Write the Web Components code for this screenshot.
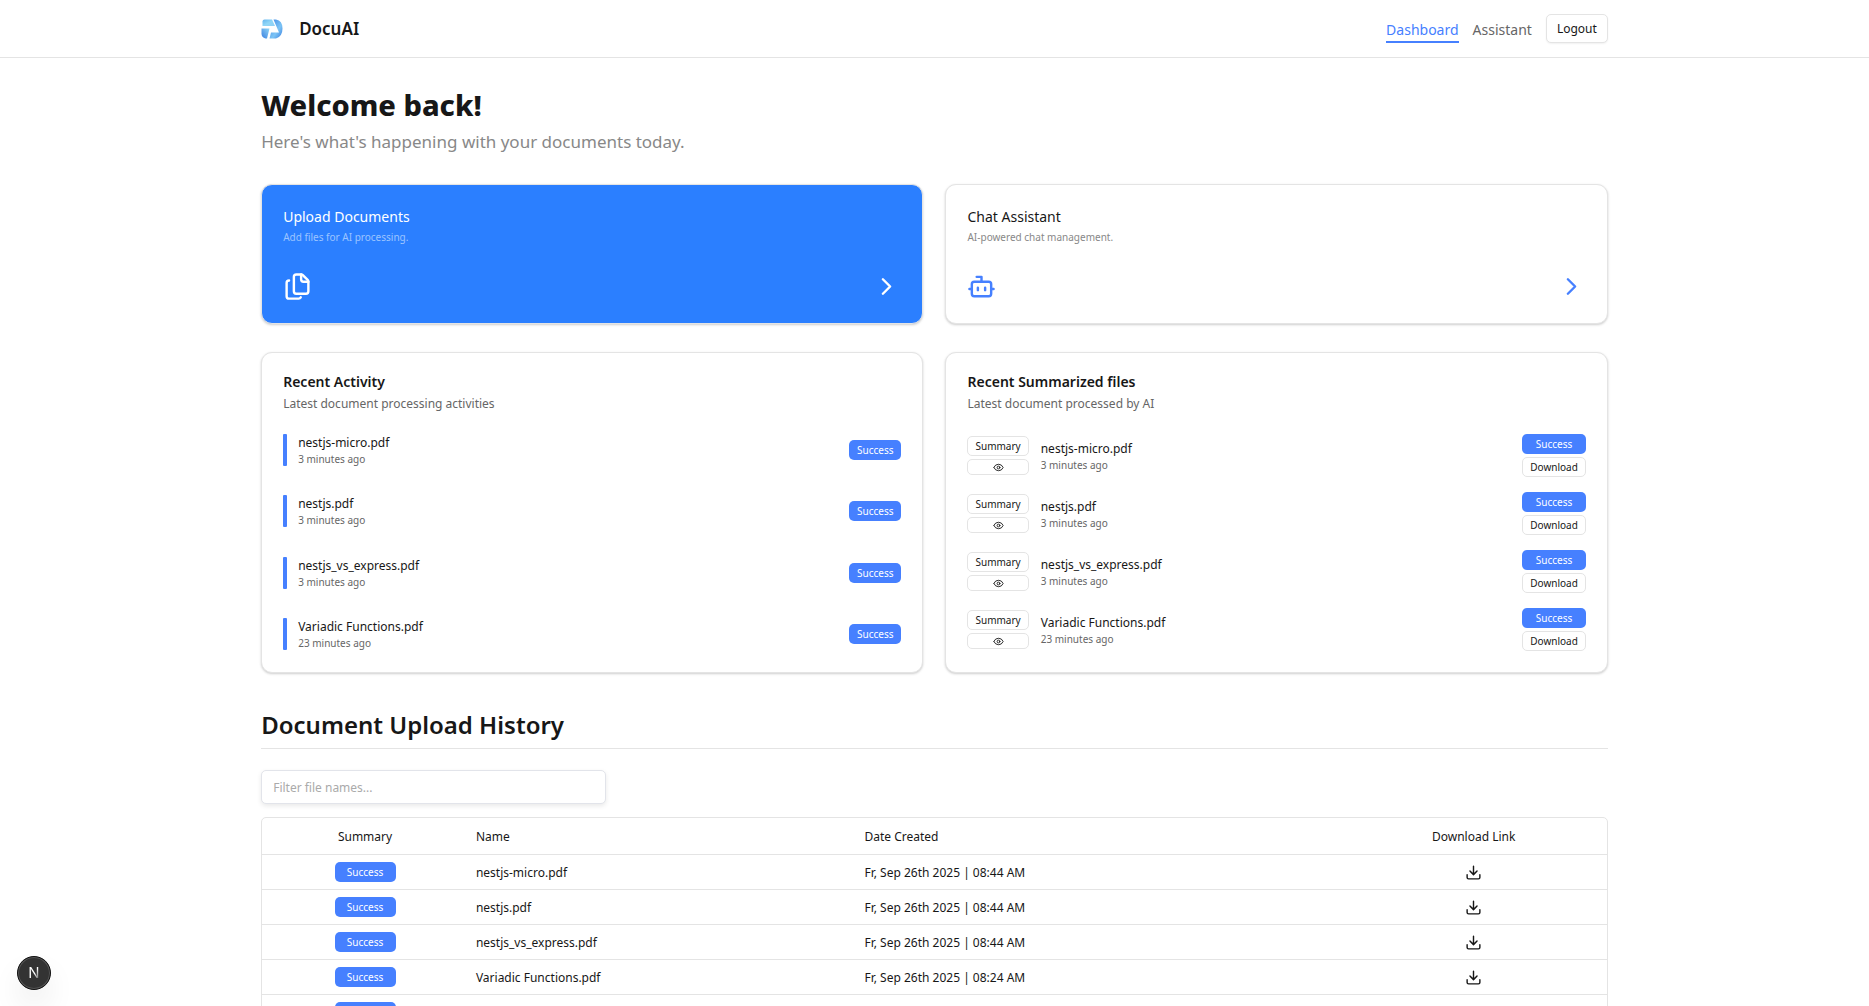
<!DOCTYPE html>
<html lang="en">
<head>
<meta charset="utf-8">
<title>DocuAI</title>
<style>
  :root { --page:calc(72% + 1px); --blue:#2b7fff; --accent:#4680ff; --line:#e4e4e4; --ink:#171717; --soft:#666; --mute:#888; }
  html { overflow: hidden; height: 100%; }
  body { margin: 0; height: 100%; overflow: hidden; background: #fff; color: var(--ink); font-family: "Noto Sans", sans-serif; font-size: 12px; line-height: 20px; }
</style>
</head>
<body>
<docu-app></docu-app>
<script>
const ICONS = {
  copy: '<path d="M15 2a2 2 0 0 1 1.4.6l4 4A2 2 0 0 1 21 8v8a2 2 0 0 1-2 2h-8a2 2 0 0 1-2-2V4a2 2 0 0 1 2-2z"/><path d="M15 2v4a2 2 0 0 0 2 2h4"/><path d="M5 7a2 2 0 0 0-2 2v11a2 2 0 0 0 2 2h8a2 2 0 0 0 1.7-1"/>',
  bot: '<path d="M12 8V4H8"/><rect width="16" height="12" x="4" y="8" rx="2"/><path d="M2 14h2M20 14h2M15 13v2M9 13v2"/>',
  chevron: '<path d="m9 18 6-6-6-6"/>',
  eye: '<path d="M2.06 12.35a1 1 0 0 1 0-.7 10.75 10.75 0 0 1 19.88 0 1 1 0 0 1 0 .7 10.75 10.75 0 0 1-19.88 0"/><circle cx="12" cy="12" r="3"/>',
  download: '<path d="M21 15v4a2 2 0 0 1-2 2H5a2 2 0 0 1-2-2v-4"/><path d="M12 3v12M7 10l5 5 5-5"/>'
};
const FILES = [
  ['nestjs-micro.pdf', '3 minutes ago', 'Fr, Sep 26th 2025 | 08:44 AM'],
  ['nestjs.pdf', '3 minutes ago', 'Fr, Sep 26th 2025 | 08:44 AM'],
  ['nestjs_vs_express.pdf', '3 minutes ago', 'Fr, Sep 26th 2025 | 08:44 AM'],
  ['Variadic Functions.pdf', '23 minutes ago', 'Fr, Sep 26th 2025 | 08:24 AM']
];
const define = (name, html) => customElements.define(name, class extends HTMLElement {
  constructor() {
    super();
    this.attachShadow({ mode: 'open' }).innerHTML = typeof html === 'function' ? html(this) : html;
  }
});

customElements.define('docu-icon', class extends HTMLElement {
  connectedCallback() {
    const root = this.shadowRoot || this.attachShadow({ mode: 'open' });
    root.innerHTML = `<style>:host{display:block;width:24px;height:24px}svg{display:block;width:100%;height:100%}</style>
      <svg viewBox="0 0 24 24" fill="none" stroke="currentColor" stroke-width="2" stroke-linecap="round" stroke-linejoin="round" aria-hidden="true">${ICONS[this.getAttribute('name')]}</svg>`;
  }
});

define('docu-badge', `<style>
  :host{display:flex;align-items:center;justify-content:center;box-sizing:border-box;height:20px;padding:0 8px;border-radius:5px;background:var(--accent);color:#fff;font-size:10px;line-height:16px}
</style><slot></slot>`);

define('docu-button', `<style>
  :host{display:block}
  button{display:flex;align-items:center;justify-content:center;box-sizing:border-box;width:100%;height:var(--h,20px);padding:0 var(--px,7px);margin:0;border:1px solid var(--line);border-radius:5px;background:#fff;color:var(--ink);font:inherit;font-size:var(--fs,10px);line-height:16px;cursor:pointer;box-shadow:var(--sh,none)}
</style><button type="button"><slot></slot></button>`);

define('docu-header', `<style>
  :host{display:block;border-bottom:1px solid var(--line)}
  header{display:flex;align-items:center;justify-content:space-between;width:var(--page);height:57px;margin:0 auto}
  .brand{display:flex;align-items:center;gap:16px;color:inherit;text-decoration:none;font-size:17px;line-height:28px;font-weight:600}
  .brand svg{display:block;width:22px;height:22px}
  nav{display:flex;align-items:center;gap:14px;font-size:14px;line-height:22px}
  nav a{color:var(--soft);text-decoration:none;padding:4px 0 0;border-bottom:2px solid transparent}
  nav a[aria-current]{color:var(--accent);border-color:var(--accent)}
  docu-button{--h:29px;--fs:12px;--px:10px;--sh:0 1px 2px rgba(0,0,0,.06)}
</style>
<header>
  <a class="brand" href="#"><svg viewBox="0 0 22 22" aria-hidden="true">
    <defs><linearGradient id="a" x1="0" y1="0" x2="1" y2="1"><stop offset="0" stop-color="#62b4ef"/><stop offset=".5" stop-color="#8fd6f7"/><stop offset="1" stop-color="#8fd0f5"/></linearGradient>
    <linearGradient id="b" x1="0" y1="0" x2="1" y2="1"><stop offset="0" stop-color="#3d86e4"/><stop offset=".6" stop-color="#7cc4f5"/><stop offset="1" stop-color="#3b7fe0"/></linearGradient>
    <linearGradient id="c" x1="0" y1="1" x2="1" y2="0"><stop offset="0" stop-color="#3b7fe0"/><stop offset="1" stop-color="#8fd6f7"/></linearGradient></defs>
    <path fill="url(#a)" d="M3.500 1.500H11l3 6.500H1.500V3.500Q1.500 1.500 3.500 1.500z"/>
    <path fill="url(#b)" d="M12.500 1.500H15q6.500 1 6.500 9T15 20.500H8.500L10 14.500h8z"/>
    <path fill="url(#c)" d="M.5 10.500H8.500L6 20.500H4.500Q.5 19.500.5 15.500z"/></svg>DocuAI</a>
  <nav><a href="#" aria-current="page">Dashboard</a><a href="#">Assistant</a><docu-button>Logout</docu-button></nav>
</header>`);

define('docu-card', `<style>
  :host{display:block;box-sizing:border-box;border:1px solid var(--line);border-radius:11px;background:var(--bg,#fff);box-shadow:0 1px 3px rgba(0,0,0,.1),0 1px 2px rgba(0,0,0,.1);min-width:0}
</style><slot></slot>`);

define('docu-action', el => `<style>
  :host{display:block;min-width:0}
  a{display:flex;flex-direction:column;padding:21px 21px 22px;color:var(--title,var(--ink));text-decoration:none}
  .t{font-size:14px;line-height:22px}
  .d{font-size:10px;line-height:18px;color:var(--desc,var(--mute))}
  .f{display:flex;justify-content:space-between;align-items:center;margin-top:26px;color:var(--ic,var(--accent))}
  docu-icon{width:29px;height:29px}
</style><docu-card><a href="#"><span class="t">${el.getAttribute('heading')}</span><span class="d">${el.getAttribute('note')}</span>
<span class="f"><docu-icon name="${el.getAttribute('icon')}"></docu-icon><docu-icon name="chevron"></docu-icon></span></a></docu-card>`);

define('docu-panel', el => `<style>
  :host{display:grid;min-width:0}
  section{display:flex;flex-direction:column;box-sizing:border-box;height:100%;padding:18px 21px 22px}
  h3{margin:0;font-size:14px;line-height:22px;font-weight:600}
  p{margin:0 0 19px;font-size:12px;line-height:22px;color:var(--soft)}
  ::slotted(*){flex:1}
</style><docu-card><section><h3>${el.getAttribute('heading')}</h3><p>${el.getAttribute('note')}</p><slot></slot></section></docu-card>`);

const nameStyle = `.n{display:block;font-size:12px;line-height:18px}.w{display:block;font-size:10px;line-height:14px;color:var(--soft)}`;

define('docu-activity', `<style>
  :host{display:flex;flex-direction:column}
  ul{flex:1;display:flex;flex-direction:column;justify-content:space-between;gap:29px;margin:0;padding:0;list-style:none}
  li,.i{display:flex}
  li{align-items:center;justify-content:space-between}
  .i{gap:11px}
  .bar{width:4px;border-radius:1px;background:var(--accent)}
  ${nameStyle}
</style><ul>${FILES.map(f => `<li><div class="i"><span class="bar"></span><div><span class="n">${f[0]}</span><span class="w">${f[1]}</span></div></div><docu-badge>Success</docu-badge></li>`).join('')}</ul>`);

define('docu-summaries', `<style>
  :host{display:flex;flex-direction:column}
  ul{display:flex;flex-direction:column;gap:15px;margin:0 0 -1px;padding:0;list-style:none}
  li{display:flex;align-items:center;gap:12px}
  .b{display:flex;flex-direction:column;gap:3px}
  .m{flex:1;min-width:0}
  .eye{--h:16px}
  docu-icon{width:11px;height:11px}
  ${nameStyle}
</style><ul>${FILES.map(f => `<li><div class="b"><docu-button>Summary</docu-button><docu-button class="eye"><docu-icon name="eye"></docu-icon></docu-button></div>
<div class="m"><span class="n">${f[0]}</span><span class="w">${f[1]}</span></div>
<div class="b"><docu-badge>Success</docu-badge><docu-button>Download</docu-button></div></li>`).join('')}</ul>`);

define('docu-history', `<style>
  :host{display:block}
  h2{margin:0 0 21px;padding-bottom:5px;border-bottom:1px solid var(--line);font-size:24px;line-height:36px;font-weight:600}
  input{display:block;box-sizing:border-box;width:345px;max-width:100%;height:34px;margin:0 0 13px;padding:0 11px;border:1px solid #e2e4ea;border-radius:5px;font:inherit;color:inherit;background:#fff;box-shadow:0 2px 5px rgba(0,0,0,.09)}
  input::placeholder{color:#aaa;opacity:1}
  .box{border:1px solid var(--line);border-radius:5px;overflow:hidden}
  table{width:100%;border-collapse:collapse;table-layout:fixed}
  th,td{padding:1px 8px 0;text-align:left;font-weight:400;border-bottom:1px solid var(--line)}
  th{height:35px} td{height:33px}
  .c{text-align:center}
  td.c{padding-top:0;height:34px}
  .c>*{margin:0 auto}
  docu-badge{width:61px}
  docu-icon{width:17px;height:17px}
  .c1{width:15.3%}.c2{width:28.9%}.c3{width:36%}
  a{display:block;width:17px;color:var(--ink)}
</style>
<h2>Document Upload History</h2>
<input type="text" placeholder="Filter file names..." aria-label="Filter file names">
<div class="box"><table><colgroup><col class="c1"><col class="c2"><col class="c3"><col></colgroup>
<thead><tr><th class="c">Summary</th><th>Name</th><th>Date Created</th><th class="c">Download Link</th></tr></thead>
<tbody>${FILES.map(f => `<tr><td class="c"><docu-badge>Success</docu-badge></td><td>${f[0]}</td><td>${f[2]}</td><td class="c"><a href="#" aria-label="Download"><docu-icon name="download"></docu-icon></a></td></tr>`).join('')}
<tr><td class="c"><docu-badge></docu-badge></td><td></td><td></td><td></td></tr></tbody></table></div>`);

define('docu-devtools', `<style>
  :host{display:block;position:fixed;left:17px;bottom:16px}
  button{display:block;width:34px;height:34px;padding:0;border:1px solid #111;border-radius:50%;background:#333;box-shadow:inset 0 0 0 1px #555,0 16px 32px -8px rgba(0,0,0,.24);color:#fff;font:400 15px/32px Inter,sans-serif;text-align:center}
  span{background:linear-gradient(120deg,#fff 55%,#666 85%);background-clip:text;-webkit-background-clip:text;color:transparent}
</style><button type="button" aria-label="Open developer tools"><span>N</span></button>`);

define('docu-app', `<style>
  :host{display:block}
  main{width:var(--page);margin:0 auto;padding-top:28px}
  h1{margin:0;font-size:29px;line-height:38px;font-weight:800}
  .lead{margin:2px 0 26px;font-size:17px;line-height:32px;color:var(--mute)}
  .g{display:grid;grid-template-columns:1fr 1fr;gap:22px;margin-bottom:28px}
  .blue{--bg:var(--blue);--title:#fff;--desc:#9cc4ff;--ic:#fff}
  docu-history{padding-top:6px}
</style>
<docu-header></docu-header>
<main>
  <h1>Welcome back!</h1>
  <p class="lead">Here's what's happening with your documents today.</p>
  <div class="g">
    <docu-action class="blue" icon="copy" heading="Upload Documents" note="Add files for AI processing."></docu-action>
    <docu-action icon="bot" heading="Chat Assistant" note="AI-powered chat management."></docu-action>
  </div>
  <div class="g">
    <docu-panel heading="Recent Activity" note="Latest document processing activities"><docu-activity></docu-activity></docu-panel>
    <docu-panel heading="Recent Summarized files" note="Latest document processed by AI"><docu-summaries></docu-summaries></docu-panel>
  </div>
  <docu-history></docu-history>
</main>
<docu-devtools></docu-devtools>`);
</script>
</body>
</html>
